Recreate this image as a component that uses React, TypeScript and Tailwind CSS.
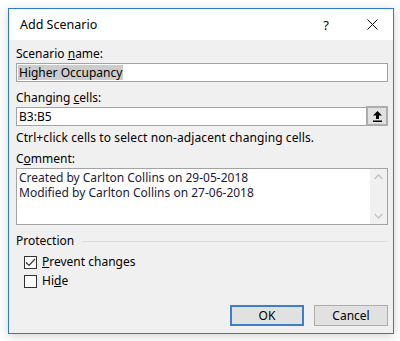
export default function App() {
  const font = { fontFamily: '"Noto Sans", "Open Sans", Arial, sans-serif' };
  return (
    <div className="w-[400px] h-[341px] bg-white pt-[8px] pl-[8px]" style={font}>
      <div className="w-[386px] h-[326px] border border-[#2b7bd1] flex flex-col shadow-[0_2px_10px_rgba(0,0,0,0.18)] text-[12px] leading-[14px] text-black">
        {/* Title bar */}
        <div className="h-[31px] bg-white flex items-center pl-[11px] pr-[15px]">
          <span className="text-[12.5px] flex-1">Add Scenario</span>
          <span className="mr-[38px] text-[13px]">?</span>
          <svg width="11" height="11" viewBox="0 0 11 11">
            <path d="M0.5 0.5 L10.5 10.5 M10.5 0.5 L0.5 10.5" stroke="#111" strokeWidth="1" />
          </svg>
        </div>

        {/* Body */}
        <div className="flex-1 bg-[#f0f0f0] pl-[7px] pr-[5px] flex flex-col">
          <div className="mt-[7px]">
            Scenario <span className="underline">n</span>ame:
          </div>
          <div className="mt-[2px] h-[19px] bg-white border border-[#a3a3a3] flex items-center pl-[1px]">
            <span className="bg-[#cccccc] px-[1px] leading-[15px]">Higher Occupancy</span>
          </div>

          <div className="mt-[9px]">
            Changing <span className="underline">c</span>ells:
          </div>
          <div className="mt-[2px] h-[19px] flex">
            <div className="flex-1 bg-white border border-[#a3a3a3] border-r-0 flex items-center pl-[2px]">B3:B5</div>
            <div className="w-[22px] h-[20px] -mt-[1px] border-2 border-[#adadad] bg-[#e1e1e1] flex items-center justify-center">
              <svg width="11" height="12" viewBox="0 0 11 12">
                <path d="M5.5 1 L10 5.5 L7 5.5 L7 9 L4 9 L4 5.5 L1 5.5 Z" fill="#000" />
                <rect x="1" y="10.5" width="9" height="1.5" fill="#000" />
              </svg>
            </div>
          </div>
          <div className="mt-[5px] tracking-[0.1px]">Ctrl+click cells to select non-adjacent changing cells.</div>

          <div className="mt-[7px]">
            C<span className="underline">o</span>mment:
          </div>
          <div className="mt-[2px] h-[57px] bg-white border border-[#a3a3a3] flex">
            <div className="flex-1 pl-[2px] pt-[1px] leading-[15px] text-[#1a1a3a]">
              <div>Created by Carlton Collins on 29-05-2018</div>
              <div>Modified by Carlton Collins on 27-06-2018</div>
            </div>
            <div className="w-[17px] bg-[#f0f0f0] flex flex-col items-center justify-between py-[5px]">
              <svg width="9" height="6" viewBox="0 0 9 6">
                <path d="M0.5 5 L4.5 1 L8.5 5" stroke="#c2c2c2" strokeWidth="1.3" fill="none" />
              </svg>
              <svg width="9" height="6" viewBox="0 0 9 6">
                <path d="M0.5 1 L4.5 5 L8.5 1" stroke="#c2c2c2" strokeWidth="1.3" fill="none" />
              </svg>
            </div>
          </div>

          <div className="mt-[9px] flex items-center">
            <span>Protection</span>
            <div className="flex-1 h-px bg-[#dcdcdc] ml-[8px]" />
          </div>

          <div className="mt-[7px] flex items-center pl-[8px]">
            <div className="w-[13px] h-[13px] border border-[#333] bg-white flex items-center justify-center">
              <svg width="11" height="9" viewBox="0 0 11 9">
                <path d="M1 4.5 L4 7.5 L10 1" stroke="#333" strokeWidth="1.2" fill="none" />
              </svg>
            </div>
            <span className="ml-[5px]">
              <span className="underline">P</span>revent changes
            </span>
          </div>
          <div className="mt-[5px] flex items-center pl-[8px]">
            <div className="w-[13px] h-[13px] border border-[#333] bg-white" />
            <span className="ml-[5px]">
              Hi<span className="underline">d</span>e
            </span>
          </div>

          <div className="mt-[17px] flex justify-end gap-[10px]">
            <div className="w-[74px] h-[21px] border-2 border-[#3a7fcd] bg-[#e1e1e1] flex items-center justify-center">OK</div>
            <div className="w-[74px] h-[21px] border border-[#adadad] bg-[#e1e1e1] flex items-center justify-center">Cancel</div>
          </div>
        </div>
      </div>
    </div>
  );
}
